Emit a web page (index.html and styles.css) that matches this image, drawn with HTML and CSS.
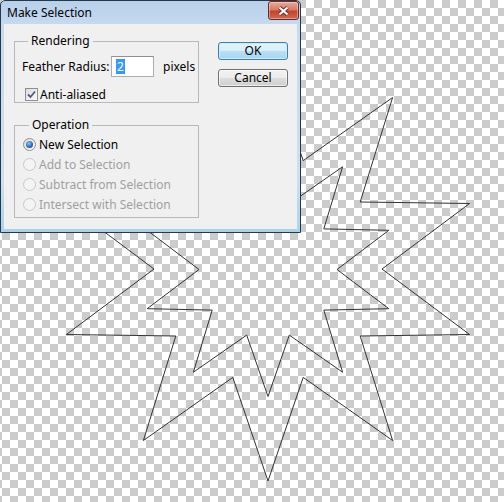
FILE: index.html
```html
<!DOCTYPE html>
<html lang="en">
<head>
    <meta charset="UTF-8">
    <title>Make Selection</title>
    <link rel="stylesheet" href="styles.css">
</head>
<body>
    <div class="canvas">
        <svg class="selection" width="504" height="502" viewBox="0 0 504 502">
            <polygon points="382,269 469.6,334.5 360.2,336 392.6,440.5 303.2,377.4 268,481 232.8,377.4 143.4,440.5 175.8,336 66.4,334.5 154,269 66.4,203.5 175.8,202 143.4,97.5 232.8,160.6 268,57 303.2,160.6 392.6,97.5 360.2,202 469.6,203.5"/>
            <polygon points="337,269.5 388.8,308.7 323.8,310.1 342.6,372.2 289.3,335.1 268,396.5 246.7,335.1 193.4,372.2 212.2,310.1 147.2,308.7 199,269.5 147.2,230.3 212.2,228.9 193.4,166.8 246.7,203.9 268,142.5 289.3,203.9 342.6,166.8 323.8,228.9 388.8,230.3"/>
        </svg>

        <div class="dialog">
            <div class="titlebar">
                <span class="title">Make Selection</span>
                <button class="close">
                    <svg width="13" height="10" viewBox="0 0 13 10">
                        <path class="x-shadow" d="M2.5 1.5 L10.5 8.5 M10.5 1.5 L2.5 8.5"/>
                        <path class="x-mark" d="M2.5 1.5 L10.5 8.5 M10.5 1.5 L2.5 8.5"/>
                    </svg>
                </button>
            </div>

            <div class="content">
                <div class="groups">
                    <fieldset class="group rendering">
                        <legend>Rendering</legend>
                        <div class="field-row">
                            <span class="field-label">Feather Radius:</span>
                            <span class="text-input"><span class="selected-text">2</span></span>
                            <span class="unit">pixels</span>
                        </div>
                        <div class="check-row">
                            <span class="checkbox">
                                <svg width="11" height="11" viewBox="0 0 11 11">
                                    <path d="M2 5.5 L4.5 8 L9 2.5"/>
                                </svg>
                            </span>
                            Anti-aliased
                        </div>
                    </fieldset>

                    <fieldset class="group operation">
                        <legend>Operation</legend>
                        <div class="radio-row"><span class="radio checked"></span>New Selection</div>
                        <div class="radio-row disabled"><span class="radio"></span>Add to Selection</div>
                        <div class="radio-row disabled"><span class="radio"></span>Subtract from Selection</div>
                        <div class="radio-row disabled"><span class="radio"></span>Intersect with Selection</div>
                    </fieldset>
                </div>

                <div class="buttons">
                    <button class="btn btn-default">OK</button>
                    <button class="btn">Cancel</button>
                </div>
            </div>
        </div>
    </div>
</body>
</html>
```

FILE: styles.css
```css
* {
    box-sizing: border-box;
}

body {
    margin: 0;
    font-family: "Segoe UI", "Noto Sans", sans-serif;
    font-size: 12px;
    color: #000;
    background: repeating-conic-gradient(#cccccc 0 25%, #ffffff 0 50%) 2px 0 / 16px 16px;
}

.canvas {
    position: relative;
    width: 504px;
    height: 502px;
    overflow: hidden;
}

.selection {
    position: absolute;
    left: 0;
    top: 0;
}

.selection polygon {
    fill: none;
    stroke: #333;
    stroke-width: 1;
}

/* dialog window */
.dialog {
    position: absolute;
    left: 0;
    top: 0;
    width: 301px;
    height: 233px;
    display: flex;
    flex-direction: column;
    padding: 0 3px 3px;
    border: 1px solid #26394b;
    border-radius: 5px 5px 0 0;
    background: linear-gradient(#b8d0ea, #c6daef 24px, #cde0f2 180px, #a9d3e8);
}

.titlebar {
    display: flex;
    justify-content: space-between;
    align-items: flex-start;
    height: 23px;
    margin: 0 -3px;
    padding: 0 1px 0 6px;
}

.title {
    line-height: 23px;
}

.close {
    display: flex;
    align-items: center;
    justify-content: center;
    width: 31px;
    height: 19px;
    padding: 0;
    border: 1px solid #6e2a20;
    border-radius: 3px;
    background: linear-gradient(#e8aa9a, #d77a66 45%, #c4442d 55%, #cf6a52);
    box-shadow: inset 0 0 0 1px rgba(255, 255, 255, 0.35);
}

.close .x-shadow {
    stroke: #6a2a22;
    stroke-width: 4;
    fill: none;
}

.close .x-mark {
    stroke: #fff;
    stroke-width: 2.2;
    fill: none;
}

.content {
    flex: 1;
    display: flex;
    gap: 19px;
    padding: 9px 10px 0;
    background: #f0f0f0;
}

/* group boxes */
.group {
    width: 185px;
    min-width: 0;
    margin: 0;
    padding: 7px 2px 0 7px;
    border: 1px solid #b9b9b9;
}

.group legend {
    margin-left: 6px;
    padding: 0 3px;
    line-height: 16px;
}

.operation {
    margin-top: 14px;
    padding: 1px 2px 3px 8px;
}

.field-row {
    display: flex;
    align-items: center;
    height: 21px;
    white-space: nowrap;
}

.field-label {
    flex-shrink: 0;
    width: 89px;
}

.text-input {
    flex-shrink: 0;
    display: flex;
    align-items: center;
    width: 43px;
    height: 21px;
    padding-left: 4px;
    border: 1px solid #abadb3;
    border-top-color: #8e9199;
    background: #fff;
}

.selected-text {
    padding: 0 1px;
    line-height: 15px;
    color: #fff;
    background: #3399ff;
}

.unit {
    margin-left: 9px;
}

.check-row {
    display: flex;
    align-items: center;
    height: 16px;
    margin-top: 9px;
    padding-left: 3px;
}

.checkbox {
    display: flex;
    align-items: center;
    justify-content: center;
    width: 13px;
    height: 13px;
    margin-right: 2px;
    border: 1px solid #8e8f8f;
    background: linear-gradient(135deg, #dcdcdc, #fbfbfb);
}

.checkbox path {
    fill: none;
    stroke: #4a5b84;
    stroke-width: 1.8;
}

.radio-row {
    display: flex;
    align-items: center;
    height: 20px;
    white-space: nowrap;
}

.radio-row.disabled {
    color: #a0a0a0;
}

.radio {
    display: flex;
    align-items: center;
    justify-content: center;
    width: 13px;
    height: 13px;
    margin-right: 3px;
    border: 1px solid #8e8f8f;
    border-radius: 50%;
    background: linear-gradient(135deg, #dcdcdc, #fbfbfb);
}

.radio.checked::after {
    content: "";
    width: 7px;
    height: 7px;
    border-radius: 50%;
    background: radial-gradient(circle at 40% 35%, #8cc6f5, #2466b4 60%, #173f7a);
}

.disabled .radio {
    border-color: #c9c9c9;
    background: #f4f4f4;
}

/* push buttons */
.buttons {
    display: flex;
    flex-direction: column;
    gap: 9px;
    margin-top: 9px;
}

.btn {
    width: 70px;
    height: 18px;
    padding: 0;
    font-family: inherit;
    font-size: 12px;
    line-height: 16px;
    color: #000;
    border: 1px solid #707070;
    border-radius: 3px;
    background: linear-gradient(#f2f2f2, #ebebeb 50%, #dddddd 50%, #cfcfcf);
    box-shadow: inset 0 0 0 1px rgba(255, 255, 255, 0.6);
}

.btn-default {
    border-color: #3c7fb1;
    background: linear-gradient(#e5f4fc, #d6eefb 50%, #b9e0f6 50%, #a6d5f1);
    box-shadow: inset 0 0 0 1px #cdebfb;
}
```
